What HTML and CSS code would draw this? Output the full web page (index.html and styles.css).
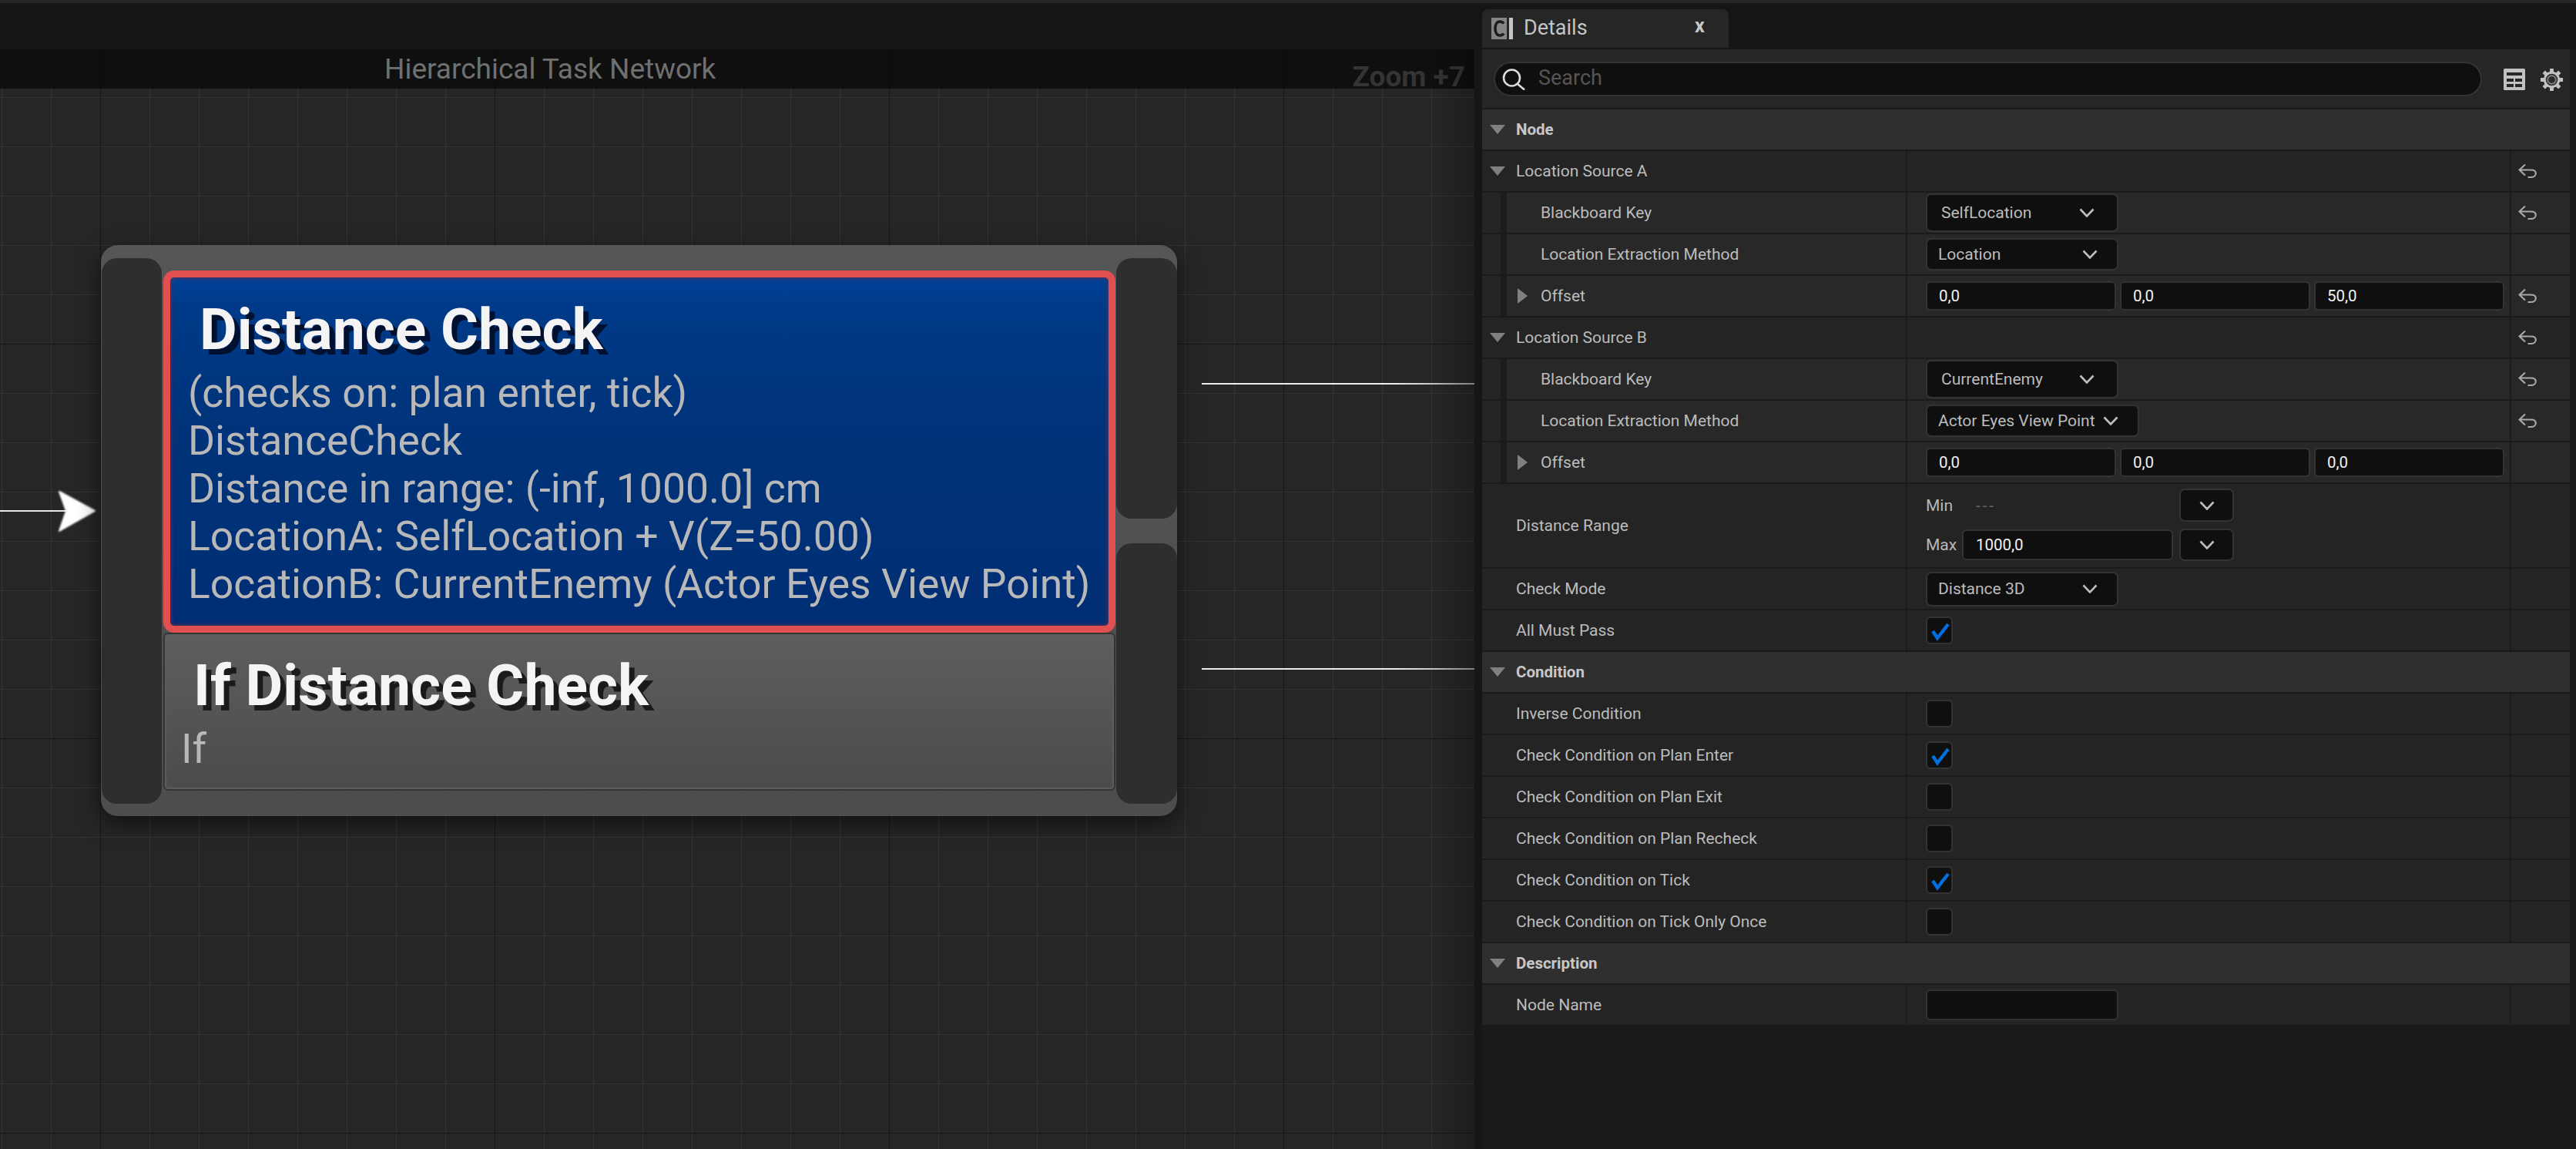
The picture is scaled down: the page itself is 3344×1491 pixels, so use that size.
FILE: index.html
```html
<!DOCTYPE html>
<html lang="en">
<head>
<meta charset="utf-8">
<title>Hierarchical Task Network</title>
<link rel="stylesheet" href="styles.css">
</head>
<body>
<svg class="defs" width="0" height="0" aria-hidden="true">
  <defs>
    <symbol id="chev" viewBox="0 0 20 12"><path d="M1.5 1.5 10 10.5 18.5 1.5" fill="none" stroke="#bdbdbd" stroke-width="2.6"/></symbol>
    <symbol id="reset" viewBox="0 0 24 20"><path d="M9 1.5 1.5 8.5 9 15.5M1.5 8.5H16.5C20 8.5 22.8 10 22.8 13S20 18 16.5 18H12.5" fill="none" stroke="#a8a8a8" stroke-width="2.2"/></symbol>
    <symbol id="check" viewBox="0 0 35 36"><path d="M9 19 15 28 29 10" fill="none" stroke="#0070e0" stroke-width="4.4"/></symbol>
  </defs>
</svg>
<div class="topstrip"></div>
<div class="tabbar">
  <div class="tab">
    <svg class="tab-icon" viewBox="0 0 28 28"><rect width="20" height="28" fill="#858585"/><path d="M16 7.5C14.5 5.5 12.5 5 11 5 7.5 5 5 8.500 5 14s2.500 9 6 9c1.500 0 3.500-.5 5-2.500" fill="none" stroke="#1c1c1c" stroke-width="3.600"/><rect x="23" width="5" height="28" fill="#c4c4c4"/></svg>
    <span class="tab-label">Details</span>
    <span class="tab-close">x</span>
  </div>
</div>
<div class="workspace">
  <main class="graph">
    <div class="graph-head">
      <span class="graph-title">Hierarchical Task Network</span>
      <span class="graph-zoom">Zoom +7</span>
    </div>
    <div class="wire wire-in"></div>
    <svg class="arrow" viewBox="0 0 60 60"><path d="M6 4 52 29 6 55 15 29Z" fill="#fff" stroke="#fff" stroke-width="2" stroke-linejoin="round"/></svg>
    <div class="wire wire-out wire-a"></div>
    <div class="wire wire-out wire-b"></div>
    <section class="node">
      <div class="pin pin-left"></div>
      <div class="stack">
        <div class="card card-selected">
          <h2 class="card-title">Distance Check</h2>
          <div class="card-text">
            <div>(checks on: plan enter, tick)</div>
            <div>DistanceCheck</div>
            <div>Distance in range: (-inf, 1000.0] cm</div>
            <div>LocationA: SelfLocation + V(Z=50.00)</div>
            <div>LocationB: CurrentEnemy (Actor Eyes View Point)</div>
          </div>
        </div>
        <div class="card card-plain">
          <h2 class="card-title">If Distance Check</h2>
          <div class="card-text"><div>If</div></div>
        </div>
      </div>
      <div class="pins-right">
        <div class="pin"></div>
        <div class="pin"></div>
      </div>
    </section>
  </main>
  <aside class="panel">
    <div class="searchrow">
      <div class="search">
        <svg class="search-icon" viewBox="0 0 30 28"><circle cx="12.500" cy="12" r="10.500" fill="none" stroke="#dcdcdc" stroke-width="2.600"/><path d="M20 20 29 27.500" stroke="#dcdcdc" stroke-width="2.600"/></svg>
        <span>Search</span>
      </div>
      <svg class="table-icon" viewBox="0 0 28 28"><rect width="28" height="28" rx="1.500" fill="#c2c2c2"/><rect x="4" y="5" width="20" height="4" fill="#262626"/><rect x="4" y="13" width="9" height="4" fill="#262626"/><rect x="15" y="13" width="9" height="4" fill="#262626"/><rect x="4" y="20" width="9" height="4" fill="#262626"/><rect x="15" y="20" width="9" height="4" fill="#262626"/></svg>
      <svg class="gear-icon" viewBox="0 0 32 32"><g stroke="#c2c2c2" stroke-width="5"><path d="M16 1V31M1 16H31M5.400 5.400 26.600 26.600M26.600 5.400 5.400 26.600"/></g><circle cx="16" cy="16" r="11" fill="#c2c2c2"/><circle cx="16" cy="16" r="8" fill="#2a2a2a"/><circle cx="16" cy="16" r="5.500" fill="none" stroke="#7c7c7c" stroke-width="2"/></svg>
    </div>

    <div class="header"><i class="tri-down"></i>Node</div>

    <div class="row">
      <div class="name"><i class="tri-down"></i><span>Location Source A</span></div>
      <div class="value"></div>
      <div class="reset"><svg class="reset-icon"><use href="#reset"/></svg></div>
    </div>
    <div class="row row-nested">
      <div class="name"><i class="indent"></i><span class="label">Blackboard Key</span></div>
      <div class="value"><div class="combo combo-key">SelfLocation<svg class="chev"><use href="#chev"/></svg></div></div>
      <div class="reset"><svg class="reset-icon"><use href="#reset"/></svg></div>
    </div>
    <div class="row row-nested">
      <div class="name"><i class="indent"></i><span class="label">Location Extraction Method</span></div>
      <div class="value"><div class="combo combo-enum">Location<svg class="chev"><use href="#chev"/></svg></div></div>
      <div class="reset"></div>
    </div>
    <div class="row row-nested">
      <div class="name"><i class="indent"></i><i class="tri-right"></i><span>Offset</span></div>
      <div class="value vec"><div class="num">0,0</div><div class="num">0,0</div><div class="num">50,0</div></div>
      <div class="reset"><svg class="reset-icon"><use href="#reset"/></svg></div>
    </div>

    <div class="row">
      <div class="name"><i class="tri-down"></i><span>Location Source B</span></div>
      <div class="value"></div>
      <div class="reset"><svg class="reset-icon"><use href="#reset"/></svg></div>
    </div>
    <div class="row row-nested">
      <div class="name"><i class="indent"></i><span class="label">Blackboard Key</span></div>
      <div class="value"><div class="combo combo-key">CurrentEnemy<svg class="chev"><use href="#chev"/></svg></div></div>
      <div class="reset"><svg class="reset-icon"><use href="#reset"/></svg></div>
    </div>
    <div class="row row-nested">
      <div class="name"><i class="indent"></i><span class="label">Location Extraction Method</span></div>
      <div class="value"><div class="combo combo-enum combo-wide">Actor Eyes View Point<svg class="chev"><use href="#chev"/></svg></div></div>
      <div class="reset"><svg class="reset-icon"><use href="#reset"/></svg></div>
    </div>
    <div class="row row-nested">
      <div class="name"><i class="indent"></i><i class="tri-right"></i><span>Offset</span></div>
      <div class="value vec"><div class="num">0,0</div><div class="num">0,0</div><div class="num">0,0</div></div>
      <div class="reset"></div>
    </div>

    <div class="row row-range">
      <div class="name"><span class="label-top">Distance Range</span></div>
      <div class="value range">
        <div class="range-line">
          <span class="range-label">Min</span>
          <div class="num num-empty">---</div>
          <div class="range-btn range-btn-a"><svg class="chev"><use href="#chev"/></svg></div>
        </div>
        <div class="range-line">
          <span class="range-label">Max</span>
          <div class="num">1000,0</div>
          <div class="range-btn"><svg class="chev"><use href="#chev"/></svg></div>
        </div>
      </div>
      <div class="reset"></div>
    </div>
    <div class="row">
      <div class="name"><span class="label-top">Check Mode</span></div>
      <div class="value"><div class="combo combo-enum combo-mode">Distance 3D<svg class="chev"><use href="#chev"/></svg></div></div>
      <div class="reset"></div>
    </div>
    <div class="row">
      <div class="name"><span class="label-top">All Must Pass</span></div>
      <div class="value"><div class="box"><svg class="tick"><use href="#check"/></svg></div></div>
      <div class="reset"></div>
    </div>

    <div class="header"><i class="tri-down"></i>Condition</div>
    <div class="row">
      <div class="name"><span class="label-top">Inverse Condition</span></div>
      <div class="value"><div class="box"></div></div>
      <div class="reset"></div>
    </div>
    <div class="row">
      <div class="name"><span class="label-top">Check Condition on Plan Enter</span></div>
      <div class="value"><div class="box"><svg class="tick"><use href="#check"/></svg></div></div>
      <div class="reset"></div>
    </div>
    <div class="row">
      <div class="name"><span class="label-top">Check Condition on Plan Exit</span></div>
      <div class="value"><div class="box"></div></div>
      <div class="reset"></div>
    </div>
    <div class="row">
      <div class="name"><span class="label-top">Check Condition on Plan Recheck</span></div>
      <div class="value"><div class="box"></div></div>
      <div class="reset"></div>
    </div>
    <div class="row">
      <div class="name"><span class="label-top">Check Condition on Tick</span></div>
      <div class="value"><div class="box"><svg class="tick"><use href="#check"/></svg></div></div>
      <div class="reset"></div>
    </div>
    <div class="row">
      <div class="name"><span class="label-top">Check Condition on Tick Only Once</span></div>
      <div class="value"><div class="box"></div></div>
      <div class="reset"></div>
    </div>

    <div class="header"><i class="tri-down"></i>Description</div>
    <div class="row">
      <div class="name"><span class="label-top">Node Name</span></div>
      <div class="value"><div class="num num-name"></div></div>
      <div class="reset"></div>
    </div>
  </aside>
</div>
</body>
</html>
```
FILE: styles.css
```css
* { box-sizing: border-box; }
html, body { margin: 0; height: 100%; }
body {
  width: 3344px;
  height: 1491px;
  overflow: hidden;
  display: flex;
  flex-direction: column;
  background: #1a1a1a;
  color: #bcbcbc;
  font-family: Roboto, "Liberation Sans", sans-serif;
}
.defs { position: absolute; }
i { display: block; flex: none; }

.topstrip { height: 4px; background: #262626; flex: none; }
.tabbar { height: 60px; flex: none; background: #151515; padding: 8px 0 2px 1924px; }
.tab {
  width: 320px; height: 50px;
  display: flex; align-items: center;
  padding-left: 12px;
  background: #262626;
  border-radius: 8px 8px 0 0;
}
.tab-icon { width: 28px; height: 28px; flex: none; }
.tab-label { margin-left: 14px; font-size: 27px; color: #c4c4c4; width: 222px; margin-top: -2px; }
.tab-close { font-size: 25px; font-weight: 700; color: #c8c8c8; margin-top: -8px; }

.workspace { flex: 1; display: flex; min-height: 0; }

.graph {
  position: relative;
  width: 1914px;
  flex: none;
  overflow: hidden;
  background-color: #262626;
  background-image:
    linear-gradient(to right, #171717 1px, transparent 1px),
    linear-gradient(to bottom, #171717 1px, transparent 1px),
    linear-gradient(to right, #333 1px, transparent 1px),
    linear-gradient(to bottom, #343434 1px, transparent 1px);
  background-size: 512px 100%, 100% 512px, 64px 100%, 100% 64px;
  background-position: 130px 0, 0 382px, 2px 0, 0 62px;
}
.graph::after {
  content: "";
  position: absolute;
  top: 0; bottom: 0; right: 0;
  width: 60px;
  background: linear-gradient(to right, transparent, rgba(0, 0, 0, .22));
  pointer-events: none;
}
.graph-head {
  height: 51px;
  display: flex;
  justify-content: space-between;
  align-items: center;
  padding: 0 12px 0 499px;
  background: rgba(0, 0, 0, .6);
}
.graph-title { font-size: 37px; color: #707070; }
.graph-zoom { font-size: 37px; font-weight: 700; color: #343434; margin-top: 20px; }

.wire { position: absolute; height: 2px; background: #e8e8e8; }
.wire-in { left: 0; width: 90px; top: 598px; }
.wire-out { left: 1560px; width: 354px; background: linear-gradient(to right, #ececec 70%, #a0a0a0); }
.wire-a { top: 433px; }
.wire-b { top: 803px; }
.arrow { position: absolute; left: 71px; top: 570px; width: 60px; height: 60px; filter: blur(1px); }

.node {
  position: absolute;
  left: 131px; top: 254px;
  width: 1397px; height: 741px;
  display: flex;
  padding: 17px 0 16px 1px;
  border-radius: 22px;
  background: linear-gradient(to bottom, rgba(104, 104, 104, .72), rgba(92, 92, 92, .72));
  box-shadow: 0 10px 30px rgba(0, 0, 0, .55);
}
.pin { flex: 1; width: 79px; background: #2e2e2e; border-radius: 20px; }
.pin-left { flex: none; width: 78px; }
.pins-right { flex: none; display: flex; flex-direction: column; gap: 32px; width: 79px; }
.stack { flex: 1; display: flex; flex-direction: column; padding: 16px 1px 0 2px; min-width: 0; }

.card { flex: none; }
.card-title {
  margin: 0;
  font-size: 75px;
  line-height: 80px;
  font-weight: 700;
  color: #f4f4f4;
  white-space: nowrap;
}
.card-text { font-size: 53.500px; line-height: 62px; color: #b8b8b8; white-space: nowrap; }

.card-selected {
  height: 470px;
  border: 9px solid #e05050;
  border-radius: 14px;
  padding-top: 27px;
  background: linear-gradient(to bottom, #00429a, #003a88 8%, #003379 45%, #002e74);
  box-shadow: inset 0 0 5px 1px #5a2f55;
}
.card-selected .card-title { padding-left: 38px; text-shadow: 7px 7px 0 #001030; margin-bottom: 12px; }
.card-selected .card-text { padding-left: 23px; }

.card-plain {
  height: 205px;
  border: 2px solid #343434;
  border-radius: 6px;
  padding-top: 26px;
  background: linear-gradient(to bottom, #5e5e5e, #4b4b4b);
  box-shadow: inset 0 0 2px 2px #5e5e5e;
}
.card-plain .card-title { padding-left: 37px; text-shadow: 7px 7px 0 #1a1a1a; margin-bottom: 12px; }
.card-plain .card-text { padding-left: 21px; }

.panel {
  width: 1422px;
  flex: none;
  display: flex;
  flex-direction: column;
  gap: 2px;
  border-left: 10px solid #161616;
  font-size: 21px;
}
.searchrow {
  height: 76px;
  flex: none;
  display: flex;
  align-items: center;
  background: #262626;
  padding-left: 15px;
}
.search {
  width: 1283px; height: 45px;
  margin-top: 1px;
  display: flex; align-items: center;
  background: #0f0f0f;
  border: 2px solid #333;
  border-radius: 23px;
  padding-left: 9px;
  font-size: 27px;
  color: #555;
}
.search span { margin-top: -3px; }
.search-icon { width: 30px; height: 28px; margin-right: 17px; flex: none; }
.table-icon { width: 28px; height: 28px; margin: 2px 0 0 28px; flex: none; }
.gear-icon { width: 31px; height: 31px; margin: 2px 0 0 19px; flex: none; }

.header {
  height: 52px;
  flex: none;
  display: flex;
  align-items: center;
  background: #2f2f2f;
  font-size: 20.500px;
  font-weight: 700;
  color: #c8c8c8;
  padding-left: 10px;
}
.tri-down { width: 20px; height: 12px; background: #808080; clip-path: polygon(0 0, 100% 0, 50% 100%); margin-right: 14px; }
.tri-right { width: 13px; height: 20px; background: #808080; clip-path: polygon(0 0, 100% 50%, 0 100%); margin: 0 17px 0 14px; }

.row {
  height: 52px;
  flex: none;
  display: grid;
  grid-template-columns: 552px 784px 76px;
  background: #242424;
}
.row-nested { background: #282828; }
.row-range { height: 108px; }
.name, .value { border-right: 2px solid #1c1c1c; }
.name { display: flex; align-items: center; padding-left: 10px; }
.row-nested .name { padding-left: 0; }
.label-top { padding-left: 34px; }
.indent { width: 32px; height: 100%; background: #242424; border-right: 8px solid #1c1c1c; }
.label { margin-left: 44px; }

.value { display: flex; align-items: center; padding-left: 24px; }
.reset { display: flex; align-items: center; padding-left: 9px; }
.reset-icon { width: 24px; height: 20px; }

.combo {
  width: 250px;
  display: flex; align-items: center; justify-content: space-between;
  background: #0f0f0f;
  border: 2px solid #333;
  border-radius: 7px;
  color: #bcbcbc;
}
.combo-key { height: 50px; padding: 0 29px 0 18px; }
.combo-enum { height: 42px; padding: 0 25px 0 14px; }
.combo-wide { width: 277px; white-space: nowrap; }
.combo-mode { height: 45px; }
.chev { width: 20px; height: 12px; flex: none; }

.num {
  height: 38px;
  display: flex; align-items: center;
  background: #0f0f0f;
  border: 2px solid #333;
  border-radius: 6px;
  padding-left: 15px;
  font-size: 20.500px;
  color: #f2f2f2;
}
.vec { gap: 5px; padding-right: 7px; }
.vec .num { flex: 1; }
.num-name { width: 250px; height: 40px; }

.range { flex-direction: column; align-items: flex-start; justify-content: flex-start; padding-top: 6px; gap: 10px; }
.range-line { display: grid; grid-template-columns: 47px 274px 79px; align-items: center; height: 42px; }
.range-line .num { width: 274px; height: 40px; padding-left: 16px; }
.range-label { color: #b8b8b8; }
.num-empty { background: none; border-color: transparent; color: #666; letter-spacing: 3px; font-variant-ligatures: none; }
.range-btn {
  width: 71px; height: 42px;
  margin-left: 8px;
  display: flex; align-items: center; justify-content: center;
  background: #0f0f0f;
  border: 2px solid #333;
  border-radius: 7px;
}
.range-btn-a { height: 43px; }

.box {
  width: 35px; height: 36px;
  background: #0f0f0f;
  border: 2px solid #333;
  border-radius: 6px;
}
.tick { display: block; width: 35px; height: 36px; margin: -2px; }
```
